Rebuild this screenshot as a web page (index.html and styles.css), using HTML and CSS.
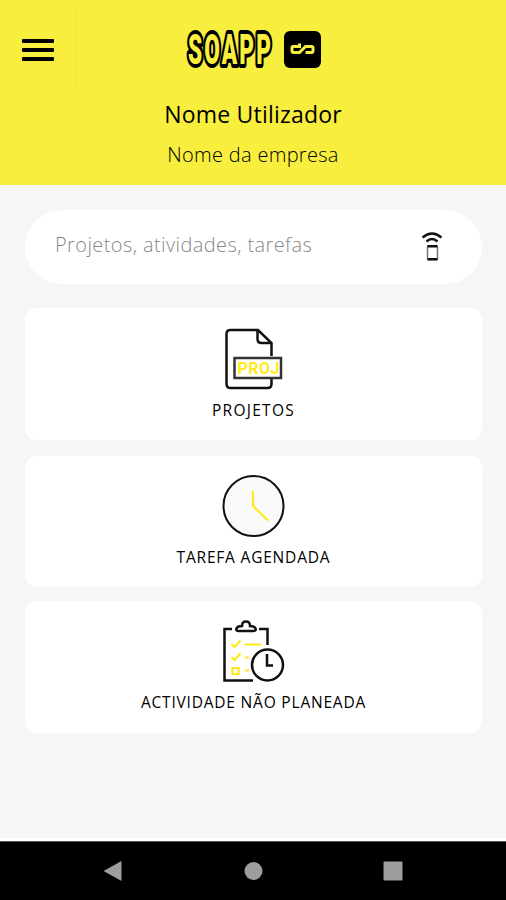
FILE: index.html
```html
<!DOCTYPE html>
<html lang="pt">
<head>
  <meta charset="UTF-8" />
  <meta name="viewport" content="width=device-width, initial-scale=1.0"/>
  <title>SOAPP</title>
  <link rel="stylesheet" href="styles.css">
</head>
<body>

<header>
  <div class="topo">
    <button class="menu" aria-label="Menu"><span></span><span></span><span></span></button>
    <div class="logo">
      <svg width="92" height="72" viewBox="0 0 92 72">
        <text class="logo-texto" x="5" y="50.500" textLength="85" lengthAdjust="spacingAndGlyphs">SOAPP</text>
      </svg>
      <svg width="37" height="37" viewBox="0 0 37 37">
        <rect width="37" height="37" rx="6"/>
        <path class="infinito" d="M15.500 12.500V15.500H9Q8 15.500 8 16.500V20Q8 21.500 9.500 21.500H15.500L21.500 15.500H27.500Q29 15.500 29 17V20Q29 21.500 27.500 21.500H21.500"/>
      </svg>
    </div>
  </div>
  <h1>Nome Utilizador</h1>
  <p>Nome da empresa</p>
</header>

<main>
  <div class="pesquisa">
    <input type="text" placeholder="Projetos, atividades, tarefas" />
    <svg width="22" height="30" viewBox="0 0 22 30">
      <path class="ondas" d="M1.500 5.500Q11-2.500 20.500 5.500M5.500 9.500Q11 4.500 16.500 9.500"/>
      <rect class="comando" x="6.500" y="14" width="10" height="13.500" rx="1"/>
      <path class="ondas" d="M6.500 14.200h10M6.500 27.300h10"/>
    </svg>
  </div>

  <a class="card">
    <svg width="64" height="64" viewBox="0 0 64 64">
      <path class="traco" d="M49.500 30V17L36 4H8.500Q4.500 4 4.500 8V58Q4.500 62 8.500 62H45.500Q49.500 62 49.500 58V52M35.500 4V13Q35.500 17 39.500 17H49"/>
      <rect class="etiqueta" x="12.500" y="32" width="46.500" height="20"/>
      <text class="proj" x="15.500" y="48" textLength="42">PROJ</text>
    </svg>
    <span class="projetos">PROJETOS</span>
  </a>

  <a class="card tarefa">
    <svg width="64" height="64" viewBox="0 0 64 64">
      <circle class="relogio" cx="31.500" cy="32" r="30"/>
      <path class="amarelo" d="M31 17V32L46 46.500"/>
    </svg>
    <span>TAREFA AGENDADA</span>
  </a>

  <a class="card">
    <svg width="64" height="64" viewBox="0 0 64 64">
      <path class="traco" d="M10 10H2.500V61.500H31M37 10H45.500V26"/>
      <path class="traco" d="M17 12Q13.500 12 14.500 9.500Q15.500 7 20 7Q20 2.500 24 2.500T28 7Q32.500 7 33.500 9.500Q34.500 12 31 12Z"/>
      <path class="amarelo" d="M9.500 25L12.500 28L18.500 21.500M22.500 25.500H39.500M9.500 38L12.500 41L18.500 34.500M23 38.500H27M23 51.500H27M10.500 49H16.500V55H10.500Z"/>
      <circle class="traco" cx="45.500" cy="46" r="15.500"/>
      <path class="traco" d="M45 35V46.500H51"/>
    </svg>
    <span>ACTIVIDADE NÃO PLANEADA</span>
  </a>
</main>

<footer>
  <svg width="20" height="22" viewBox="0 0 20 22"><path d="M0.500 11L18.500 1V21Z"/></svg>
  <svg width="20" height="22" viewBox="0 0 20 22"><circle cx="10.500" cy="11" r="9"/></svg>
  <svg width="20" height="22" viewBox="0 0 20 22"><rect x="0.500" y="1.500" width="19" height="19" rx="1"/></svg>
</footer>

</body>
</html>
```
FILE: styles.css
```css
* {
  box-sizing: border-box;
}
body {
  margin: 0;
  height: 900px;
  display: flex;
  flex-direction: column;
  font-family: 'Open Sans', 'Noto Sans', sans-serif;
  background-color: #f6f6f6;
  color: #000;
  overflow: hidden;
}
header {
  height: 185px;
  background-color: #f8ee3e;
  text-align: center;
}
.topo {
  display: grid;
  grid-template-columns: 76px 1fr 76px;
  padding-top: 12px;
  height: 86px;
}
.menu {
  display: flex;
  flex-direction: column;
  justify-content: center;
  gap: 5px;
  padding: 2px 0 0 22px;
  background: none;
  border: none;
  border-right: 1px solid #efe338;
}
.menu span {
  width: 32px;
  height: 4px;
  background: #000;
  border-radius: 1px;
}
.logo {
  display: flex;
  justify-content: center;
  align-items: center;
  gap: 9px;
  padding-right: 3px;
}
.logo svg {
  overflow: visible;
}
.logo-texto {
  font-family: Roboto, 'Liberation Sans', sans-serif;
  font-size: 43px;
  font-weight: 900;
  letter-spacing: 4px;
  fill: #f8ee3e;
  stroke: #000;
  stroke-width: 8px;
  stroke-linejoin: round;
  paint-order: stroke;
}
.infinito {
  fill: none;
  stroke: #f8ee3e;
  stroke-width: 3px;
}
header h1 {
  margin: 14px 0 0;
  font-size: 23px;
  font-weight: 400;
  line-height: 28px;
  letter-spacing: 0.2px;
}
header p {
  margin: 14px 0 0;
  font-size: 20px;
  font-weight: 300;
  line-height: 26px;
  letter-spacing: 0.3px;
}
main {
  flex: 1;
  padding: 25px 24px 0 25px;
  border-bottom: 3px solid #fff;
}
.pesquisa {
  display: flex;
  align-items: center;
  height: 74px;
  margin-bottom: 24px;
  padding: 0 39px 0 30px;
  background: #fff;
  border-radius: 37px;
}
.pesquisa input {
  flex: 1;
  padding: 0 0 6px;
  border: none;
  outline: none;
  background: none;
  font-family: inherit;
  font-size: 20px;
  font-weight: 300;
  letter-spacing: 0.4px;
}
.pesquisa input::placeholder {
  color: #888;
}
.ondas, .comando {
  fill: none;
  stroke: #111;
  stroke-width: 2.4px;
}
.comando {
  stroke: #777;
  stroke-width: 1.5px;
}
.card {
  display: flex;
  flex-direction: column;
  align-items: center;
  height: 132px;
  margin-bottom: 16px;
  padding-top: 18px;
  background: #fff;
  border-radius: 12px;
}
.card.tarefa {
  height: 131px;
  margin-bottom: 14px;
}
.card span {
  margin-top: 8px;
  font-size: 15.5px;
  line-height: 22px;
  letter-spacing: 0.8px;
  white-space: nowrap;
}
.card .projetos {
  margin-top: 9px;
  letter-spacing: 1.3px;
}
.traco {
  fill: none;
  stroke: #111;
  stroke-width: 2.5px;
}
.etiqueta {
  fill: #fff;
  stroke: #333;
  stroke-width: 2.5px;
}
.proj {
  font-family: Roboto, sans-serif;
  font-size: 16px;
  font-weight: 700;
  fill: #ffeb19;
}
.relogio {
  fill: #fafafa;
  stroke: #111;
  stroke-width: 2px;
}
.amarelo {
  fill: none;
  stroke: #ffe81c;
  stroke-width: 2.2px;
}
footer {
  display: flex;
  justify-content: space-between;
  height: 59px;
  padding: 18px 103px 0;
  background: #000;
  border-top: 1px solid #555;
}
footer svg {
  fill: #9e9e9e;
}
```
